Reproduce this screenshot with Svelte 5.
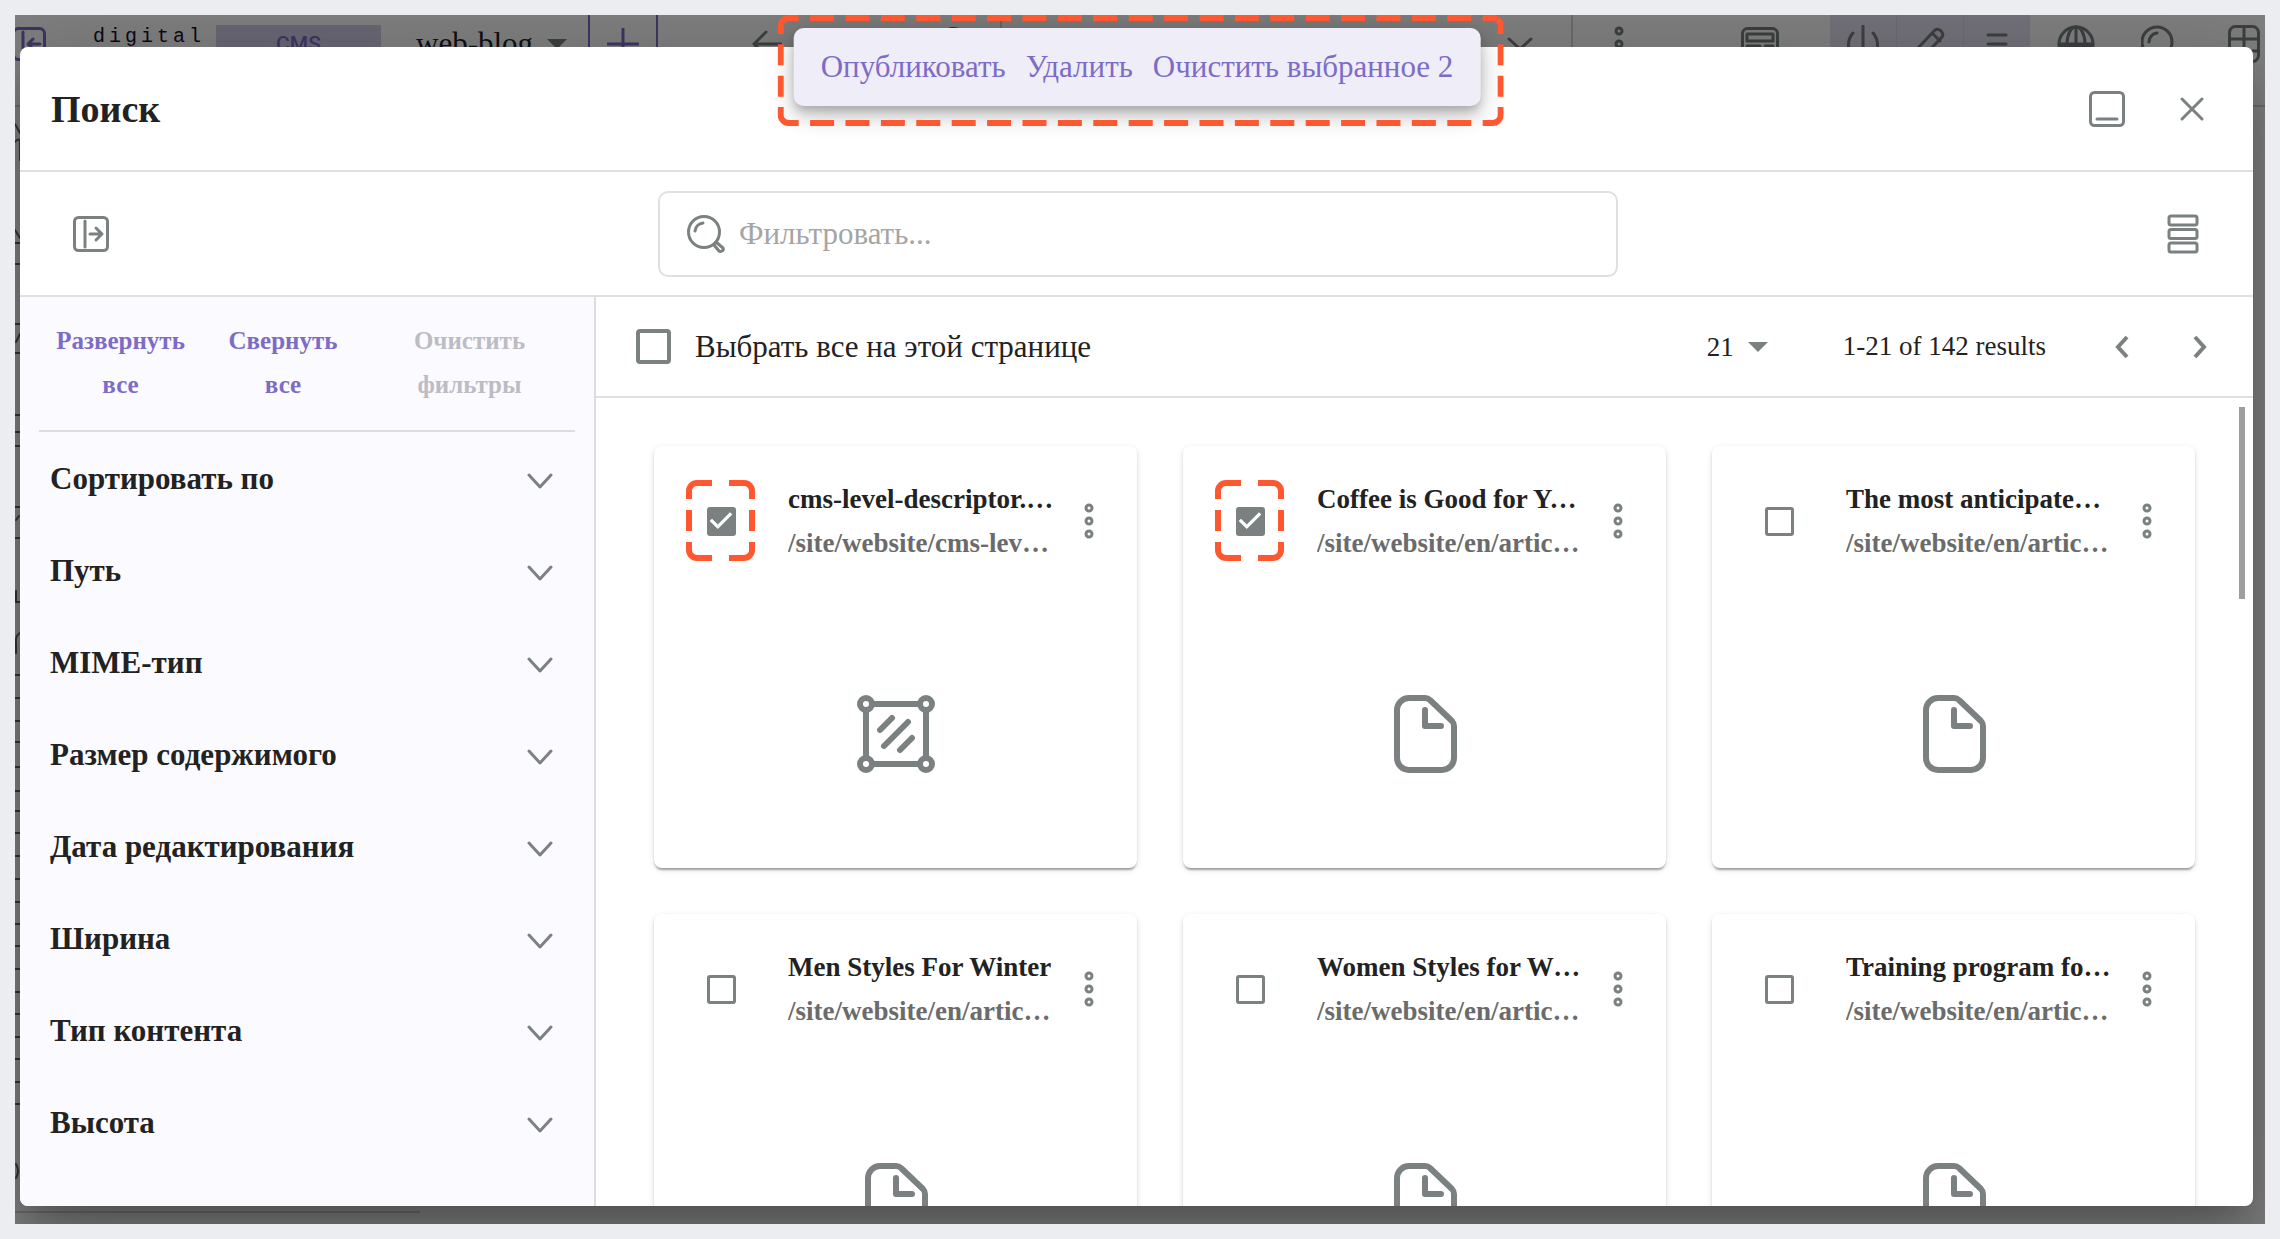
<script>
	let query = ''
	let pageSize = 21
	let selectAll = false
	let barWidth = 687
	let barHeight = 78

	const filters = [
		'Сортировать по',
		'Путь',
		'MIME-тип',
		'Размер содержимого',
		'Дата редактирования',
		'Ширина',
		'Тип контента',
		'Высота'
	]

	let items = [
		{name: 'cms-level-descriptor.level.xml', path: '/site/website/cms-level-descriptor.level.xml', type: 'asset', selected: true},
		{name: 'Coffee is Good for Your Health', path: '/site/website/en/articles/2021/coffee', type: 'page', selected: true},
		{name: 'The most anticipated movies', path: '/site/website/en/articles/2021/movies', type: 'page', selected: false},
		{name: 'Men Styles For Winter', path: '/site/website/en/articles/2021/men', type: 'page', selected: false},
		{name: 'Women Styles for Winter', path: '/site/website/en/articles/2021/women', type: 'page', selected: false},
		{name: 'Training program for beginners', path: '/site/website/en/articles/2021/training', type: 'page', selected: false}
	]

	// cards that get a dashed marker round their tick box
	const marked = [0, 1]

	$: selectedCount = items.filter(item => item.selected).length

	// start and end of every dash between the two corners of one side
	function dashes(length, corner, dash, count){
		const gap = (length - corner * 2 - dash * count) / (count + 1)
		return Array.from({length: count}, (_, i) => {
			const start = corner + gap + i * (dash + gap)
			return [start, start + dash]
		})
	}

	function markerPath(w, h, cornerX, countX){
		const cornerY = 19
		const r = w - 3
		const b = h - 3
		let d = `M3 ${cornerY}V11a8 8 0 0 1 8-8H${cornerX}`
		d += `M${w - cornerX} 3H${r - 8}a8 8 0 0 1 8 8V${cornerY}`
		d += `M${r} ${h - cornerY}V${b - 8}a8 8 0 0 1-8 8H${w - cornerX}`
		d += `M${cornerX} ${b}H11a8 8 0 0 1-8-8V${h - cornerY}`
		dashes(w, cornerX, 24, countX).forEach(([from, to]) => {
			d += `M${from} 3H${to}M${from} ${b}H${to}`
		})
		dashes(h, cornerY, 21, h > 100 ? 2 : 1).forEach(([from, to]) => {
			d += `M3 ${from}V${to}M${r} ${from}V${to}`
		})
		return d
	}

	function publish(){
		console.log('publish', items.filter(item => item.selected))
	}

	function remove(){
		items = items.filter(item => !item.selected)
	}

	function clearSelected(){
		items = items.map(item => ({...item, selected: false}))
		selectAll = false
	}

	function toggleAll(){
		items = items.map(item => ({...item, selected: selectAll}))
	}
</script>

{#snippet marker(w, h, cornerX, countX)}
	<svg class="marker" width={w} height={h} viewBox="0 0 {w} {h}" aria-hidden="true">
		<path d={markerPath(w, h, cornerX, countX)} />
	</svg>
{/snippet}

<div class="page">
	<div class="app">
		<div class="topbar" aria-hidden="true">
			<svg class="panel purple" width="34" height="34" viewBox="0 0 34 34"><rect x="1.5" y="1.5" width="31" height="31" rx="5" /><path d="M11 5v24M28 17H16m5-5-5 5 5 5" /></svg>
			<span class="logo">digital</span>
			<span class="cms">CMS</span>
			<span class="site">web-blog</span>
			<span class="caret dark"></span>
			<span class="add"><svg class="purple" width="32" height="32" viewBox="0 0 32 32"><path d="M16 1v30M1 16h30" /></svg></span>
			<svg class="back" width="30" height="28" viewBox="0 0 30 28"><path d="M29 14H2M14 2 2 14l12 12" /></svg>
			<span class="address">St</span>
			<span class="line"></span>
			<svg class="down" width="26" height="14" viewBox="0 0 26 14"><path d="m2 2 11 10L24 2" /></svg>
			<span class="options"><svg width="10" height="36" viewBox="0 0 10 36"><circle cx="5" cy="5" r="3" /><circle cx="5" cy="18" r="3" /><circle cx="5" cy="31" r="3" /></svg></span>
			<svg class="layout" width="38" height="34" viewBox="0 0 38 34"><rect x="1.5" y="1.5" width="35" height="31" rx="5" /><path d="M6 7h26v7H6zM6 19h13v9H6zM24 19h8M24 24h8" /></svg>
			<span class="modes">
				<span><svg width="34" height="38" viewBox="0 0 34 38"><path d="M17 1v22M7 8a18 18 0 0 0 0 24M27 8a18 18 0 0 1 0 24" /></svg></span>
				<span><svg width="34" height="34" viewBox="0 0 34 34"><path d="M3 31l2-10L22 3q3-2 6 1 3 3 1 6L12 28zM19 6l8 8" /></svg></span>
				<span><svg width="22" height="24" viewBox="0 0 22 24"><path d="M2 3h18M2 12h18M2 21h18" /></svg></span>
			</span>
			<svg class="globe" width="38" height="38" viewBox="0 0 38 38"><circle cx="19" cy="19" r="17" /><path d="M19 2v34M2 19h34M4 22h30" /><ellipse cx="19" cy="19" rx="9" ry="17" /></svg>
			<svg class="find" width="38" height="38" viewBox="0 0 38 38"><circle cx="16" cy="17" r="15" /><path d="M8 17a9 9 0 0 1 8-9M27 28l8 8" /></svg>
			<svg class="table" width="32" height="38" viewBox="0 0 32 38"><rect x="1.5" y="1.5" width="29" height="35" rx="6" /><path d="M16 1v25M1 14h29M1 26h29" /></svg>
		</div>
		<svg class="tree" width="6" height="1120" viewBox="0 90 6 1120" aria-hidden="true">
			<path d="M0 124l5 9M0 142q4-5 5 0v18M0 230l5 8M0 243h5M0 264h5M0 324h5M1 342l4-8M0 353h5M0 415h5M0 432h5M0 446h5M0 507h5M1 520l3-4M0 538h5M1 591v11h4M5 633q-5 3-4 10v10M0 675h5M0 698h5M0 721h5M0 742h5M0 767h5M0 791h5M0 811h5M0 833h5M0 856h5M0 879h5M0 902h5M0 924h5M0 946h5M0 969h5M0 992h5M0 1014h5M0 1037h5M0 1059h5M0 1082h5M0 1104h5M1 1164q4 7 0 14" />
		</svg>
		<div class="footline"></div>

		<div class="dialog" role="dialog" aria-labelledby="dialog-title">
			<header>
				<h1 id="dialog-title">Поиск</h1>
				<div class="window-buttons">
					<button aria-label="Свернуть"><svg width="36" height="36" viewBox="0 0 36 36"><rect x="1.5" y="1.5" width="33" height="33" rx="4" /><path d="M8 28h20" /></svg></button>
					<button aria-label="Закрыть"><svg width="26" height="26" viewBox="0 0 26 26"><path d="m3 3 20 20M23 3 3 23" /></svg></button>
				</div>
			</header>

			<div class="toolbar">
				<button aria-label="Фильтры"><svg width="36" height="36" viewBox="0 0 36 36"><rect x="1.5" y="1.5" width="33" height="33" rx="4" /><path d="M12 5v26M17 18h11m-5-6 6 6-6 6" /></svg></button>
				<label class="search">
					<svg width="40" height="40" viewBox="0 0 40 40"><circle cx="18" cy="18" r="15.5" /><path d="M9 17a9 9 0 0 1 8-8M28 31l2-3 7 6q1 2-1 3t-3 0z" /></svg>
					<input type="text" placeholder="Фильтровать..." aria-label="Фильтровать" bind:value={query} />
				</label>
				<button aria-label="Список"><svg width="32" height="40" viewBox="0 0 32 40"><rect x="2" y="2" width="28" height="9" rx="2" /><rect x="2" y="15.5" width="28" height="9" rx="2" /><rect x="2" y="29" width="28" height="9" rx="2" /></svg></button>
			</div>

			<div class="body">
				<aside>
					<div class="filter-actions">
						<button>Развернуть все</button>
						<button>Свернуть все</button>
						<button disabled>Очистить фильтры</button>
					</div>
					<div class="filters">
						{#each filters as filter}
							<button class="filter">
								{filter}
								<svg width="26" height="16" viewBox="0 0 26 16"><path d="m2 2 11 12L24 2" /></svg>
							</button>
						{/each}
					</div>
				</aside>

				<section>
					<div class="pager">
						<input class="big" id="select-all" type="checkbox" bind:checked={selectAll} on:change={toggleAll} />
						<label for="select-all">Выбрать все на этой странице</label>
						<div class="size">
							<select aria-label="Результатов на странице" bind:value={pageSize}>
								<option value={9}>9</option>
								<option value={15}>15</option>
								<option value={21}>21</option>
							</select>
							<span class="caret"></span>
						</div>
						<span class="range">1-21 of 142 results</span>
						<button aria-label="Назад"><svg width="16" height="26" viewBox="0 0 16 26"><path d="M13 3 4 13l9 10" /></svg></button>
						<button aria-label="Вперёд"><svg width="16" height="26" viewBox="0 0 16 26"><path d="m3 3 9 10-9 10" /></svg></button>
					</div>

					<div class="cards">
						{#each items as item, index}
							<article>
								<div class="card-head">
									<div class="tick">
										<input id="item-{index}" type="checkbox" bind:checked={item.selected} />
										{#if marked.includes(index)}
											{@render marker(69, 81, 26, 0)}
										{/if}
									</div>
									<div class="card-text">
										<label for="item-{index}">{item.name}</label>
										<p>{item.path}</p>
									</div>
									<button aria-label="Меню"><svg width="10" height="36" viewBox="0 0 10 36"><circle cx="5" cy="5" r="3" /><circle cx="5" cy="18" r="3" /><circle cx="5" cy="31" r="3" /></svg></button>
								</div>
								<div class="preview">
									{#if item.type === 'asset'}
										<svg width="80" height="80" viewBox="0 0 80 80"><path d="M18 10h44M18 70h44M10 18v44M70 18v44M24 36l12-12M28 52l24-24M44 56l12-12" /><circle cx="10" cy="10" r="6" /><circle cx="70" cy="10" r="6" /><circle cx="10" cy="70" r="6" /><circle cx="70" cy="70" r="6" /></svg>
									{:else}
										<svg width="64" height="80" viewBox="0 0 64 80"><path d="M16 4h16q3 0 5 2l22 21q2 2 2 5v32a12 12 0 0 1-12 12H16A12 12 0 0 1 4 64V16A12 12 0 0 1 16 4zM32 16v16h16" /></svg>
									{/if}
								</div>
							</article>
						{/each}
					</div>
					<div class="scrollbar"></div>
				</section>
			</div>
		</div>

		<div class="selection" bind:offsetWidth={barWidth} bind:offsetHeight={barHeight}>
			<button on:click={publish}>Опубликовать</button>
			<button on:click={remove}>Удалить</button>
			<button on:click={clearSelected}>Очистить выбранное {selectedCount}</button>
			{@render marker(barWidth + 39, barHeight + 33, 21, 19)}
		</div>
	</div>
</div>

<style>
	:global(body){
		margin: 0;
		background: #ecedf1;
	}
	.page{
		box-sizing: border-box;
		height: 100vh;
		padding: 15px;
		font-family: "Liberation Serif", "Times New Roman", serif;
		font-size: 31px;
		color: #222;
	}
	.app{
		position: relative;
		box-sizing: border-box;
		display: flex;
		height: 100%;
		padding: 32px 12px 18px 5px;
		background: #7f7f7f;
		overflow: hidden;
	}
	button{
		padding: 0;
		border: 0;
		background: none;
		font: inherit;
		color: inherit;
		cursor: pointer;
	}
	svg{
		display: block;
		flex: none;
		fill: none;
		stroke: #7b8081;
		stroke-width: 3;
		stroke-linecap: round;
		stroke-linejoin: round;
	}

	/* dimmed application behind the dialog */
	.topbar{
		position: absolute;
		top: 0;
		left: 0;
		right: 0;
		display: flex;
		align-items: center;
		height: 58px;
		padding: 0 5px 32px 0;
		border-bottom: 2px solid #6b6b6b;
		white-space: nowrap;
	}
	.topbar svg{
		stroke: #3d4040;
	}
	.topbar .purple{
		stroke: #3e3663;
	}
	.panel{
		margin-left: -3px;
	}
	.logo{
		width: 118px;
		margin: 0 0 16px 47px;
		font-family: "Liberation Mono", monospace;
		font-size: 20px;
		letter-spacing: 4px;
		color: #0d0a18;
	}
	.cms{
		width: 165px;
		margin-left: 5px;
		background: #6a6775;
		font: 500 21px/38px Roboto, sans-serif;
		text-align: center;
		color: #3e3663;
	}
	.site{
		margin: 0 14px 0 35px;
		color: #111;
	}
	.caret{
		border: 10px solid transparent;
		border-top-color: #7b8081;
		border-bottom: 0;
	}
	.caret.dark{
		border-top-color: #3d4040;
	}
	.add{
		display: flex;
		align-items: center;
		justify-content: center;
		width: 66px;
		height: 58px;
		margin-left: 21px;
		border: solid #3e3663;
		border-width: 0 2px;
	}
	.back{
		margin-left: 94px;
	}
	.address{
		margin: 0 30px 12px 162px;
		color: #333;
	}
	.line{
		height: 46px;
		border-left: 2px solid #6b6b6b;
	}
	.down{
		margin-left: auto;
	}
	.options{
		display: flex;
		align-items: center;
		height: 58px;
		margin-left: 38px;
		padding-left: 41px;
		border-left: 2px solid #6b6b6b;
	}
	.layout{
		margin: 0 51px 0 117px;
	}
	.modes{
		display: flex;
		height: 58px;
		background: #737179;
	}
	.modes span{
		display: flex;
		align-items: center;
		justify-content: center;
		width: 66px;
	}
	.modes span + span{
		border-left: 1px solid #6b6b73;
	}
	.globe{
		margin: 0 46px 0 27px;
	}
	.table{
		margin-left: 49px;
	}
	.tree{
		position: absolute;
		top: 75px;
		left: 0;
		stroke: #333;
	}
	.tree path{
		stroke-width: 2;
	}
	.footline{
		position: absolute;
		left: 0;
		bottom: 11px;
		width: 18%;
		height: 2px;
		background: #6b6b6b;
	}

	.dialog{
		position: relative;
		display: flex;
		flex: 1;
		flex-direction: column;
		min-width: 0;
		border-radius: 8px;
		background: #fff;
		overflow: hidden;
		box-shadow: 0 21px 29px -13px rgba(0, 0, 0, .2), 0 46px 73px 6px rgba(0, 0, 0, .14), 0 17px 89px 15px rgba(0, 0, 0, .12);
	}
	header, .toolbar{
		display: flex;
		align-items: center;
		justify-content: space-between;
		height: 123px;
		flex: none;
		border-bottom: 2px solid #e0e0e0;
	}
	header{
		padding: 0 48px 0 31px;
	}
	h1{
		margin: 0;
		font-size: 38px;
	}
	.window-buttons{
		display: flex;
		align-items: center;
		gap: 54px;
	}
	.toolbar{
		padding: 0 54px 0 53px;
	}
	.search{
		display: flex;
		align-items: center;
		gap: 13px;
		box-sizing: border-box;
		width: 960px;
		max-width: 60%;
		height: 86px;
		padding: 0 26px;
		border: 2px solid #e0e0e0;
		border-radius: 10px;
	}
	.search input{
		flex: 1;
		min-width: 0;
		padding: 0;
		border: 0;
		outline: 0;
		background: none;
		font: inherit;
	}
	.search input::placeholder{
		color: #a5a5a5;
	}

	.body{
		display: flex;
		flex: 1;
		min-height: 0;
	}
	aside{
		width: 536px;
		flex: none;
		padding: 0 19px;
		border-right: 2px solid #dcdce3;
		background: #fbfaff;
	}
	.filter-actions{
		display: grid;
		grid-template-columns: 163fr 162fr 211fr;
		padding: 22px 0 23px;
		border-bottom: 2px solid #dcdce3;
	}
	.filter-actions button{
		padding: 0 15px;
		font-size: 25px;
		font-weight: bold;
		line-height: 44px;
		color: #7d6cc6;
	}
	.filter-actions button:disabled{
		padding: 0 40px;
		color: #bdbcc4;
		cursor: default;
	}
	.filters{
		padding-top: 1px;
	}
	.filter{
		display: flex;
		align-items: center;
		justify-content: space-between;
		width: 100%;
		height: 92px;
		padding: 0 22px 0 11px;
		font-weight: bold;
	}
	.filter svg{
		margin-top: 4px;
	}

	section{
		position: relative;
		flex: 1;
		min-width: 0;
		overflow: hidden;
	}
	.pager{
		display: flex;
		align-items: center;
		height: 99px;
		padding: 0 45px 0 40px;
		border-bottom: 2px solid #e0e0e0;
	}
	.pager label{
		margin: 0 auto 0 24px;
	}
	.pager svg{
		stroke-width: 4;
		stroke-linecap: butt;
		stroke-linejoin: miter;
	}
	.pager button{
		margin-left: 62px;
	}
	.range{
		margin: 0 6px 0 75px;
		font-size: 27px;
	}
	.size{
		display: flex;
		align-items: center;
		gap: 14px;
	}
	select{
		padding: 0;
		border: 0;
		appearance: none;
		background: none;
		font: inherit;
		font-size: 27px;
		color: inherit;
	}
	input[type="checkbox"]{
		appearance: none;
		box-sizing: border-box;
		flex: none;
		width: 29px;
		height: 29px;
		margin: 0;
		border: 3px solid #7b8081;
		border-radius: 3px;
	}
	input[type="checkbox"].big{
		width: 35px;
		height: 35px;
		border-width: 4px;
		border-radius: 4px;
	}
	input[type="checkbox"]:checked{
		border: 0;
		background: #7b8081;
	}
	input[type="checkbox"]:checked::after{
		content: '';
		display: block;
		height: 100%;
		background: #fff;
		clip-path: polygon(39% 78%, 11% 50%, 19% 42%, 39% 62%, 81% 20%, 89% 28%);
	}

	.cards{
		display: grid;
		grid-template-columns: repeat(3, 1fr);
		gap: 46px;
		padding: 48px 58px;
	}
	article{
		min-width: 0;
		height: 422px;
		border-radius: 8px;
		box-shadow: 0 4px 2px -2px rgba(0, 0, 0, .2), 0 2px 2px 0 rgba(0, 0, 0, .14), 0 2px 6px 0 rgba(0, 0, 0, .12);
	}
	.card-head{
		display: flex;
		align-items: center;
		height: 150px;
		padding: 0 13px 0 31px;
	}
	.tick{
		position: relative;
		display: flex;
		align-items: center;
		justify-content: center;
		width: 72px;
		height: 72px;
		margin-right: 31px;
	}
	.tick .marker{
		top: -5px;
		left: 1px;
	}
	.card-text{
		flex: 1;
		min-width: 0;
		font-size: 27px;
		font-weight: bold;
		line-height: 44px;
	}
	.card-text label, .card-text p{
		display: block;
		margin: 0;
		overflow: hidden;
		text-overflow: ellipsis;
		white-space: nowrap;
	}
	.card-text p{
		color: #6b6b6b;
	}
	.card-head button{
		display: flex;
		justify-content: center;
		width: 70px;
	}
	.preview{
		display: flex;
		align-items: center;
		justify-content: center;
		height: 276px;
	}
	.preview svg{
		stroke-width: 6;
	}
	.scrollbar{
		position: absolute;
		top: 110px;
		right: 8px;
		width: 6px;
		height: 192px;
		background: #9e9e9e;
	}

	.selection{
		position: absolute;
		top: 13px;
		left: 50%;
		transform: translateX(-50%);
		display: flex;
		align-items: center;
		gap: 20px;
		height: 78px;
		margin-left: -3px;
		padding: 0 27px;
		border-radius: 10px;
		background: #efedf8;
		color: #7d6cc6;
		white-space: nowrap;
		box-shadow: 0 6px 10px -2px rgba(0, 0, 0, .2), 0 12px 19px 0 rgba(0, 0, 0, .14), 0 2px 35px 0 rgba(0, 0, 0, .12);
	}
	.marker{
		position: absolute;
		stroke: #ff572f;
		stroke-width: 6;
		stroke-linecap: butt;
		pointer-events: none;
	}
	.selection .marker{
		top: -13px;
		left: -16px;
	}
</style>
